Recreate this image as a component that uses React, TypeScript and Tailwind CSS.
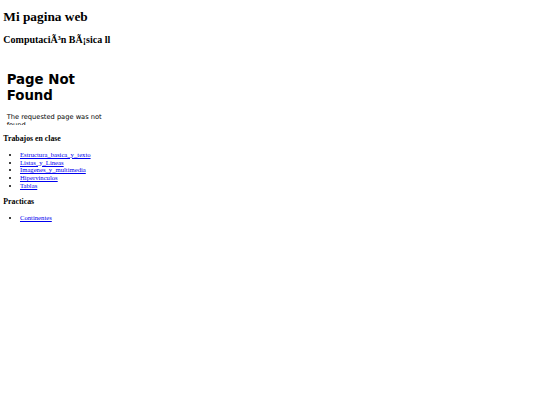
import React from "react";

const trabajos = [
    "Estructura_basica_y_texto",
    "Listas_y_Lineas",
    "Imagenes_y_multimedia",
    "Hipervinculos",
    "Tablas",
];

const practicas = ["Continentes"];

// marco embebido que muestra la pagina de error
const NotFoundFrame: React.FC = () => (
    <div className="inline-block w-[280px] h-[172px] overflow-hidden bg-white align-baseline">
        <div className="mx-2 mb-2 pt-[24px] font-['DejaVu_Sans',sans-serif] leading-[normal] text-black">
            <h1 className="mt-[21px] mb-0 text-[32px] font-bold leading-[1.2]">Page Not Found</h1>
            <p className="mt-[22px] mb-4 text-[16px] leading-[1.2]">The requested page was not found</p>
        </div>
    </div>
);

const LinkList: React.FC<{ items: string[] }> = ({ items }) => (
    <ul className="my-4 pl-10 list-disc">
        {items.map((item) => (
            <li key={item} className="leading-[1.15]">
                <a href="#" className="text-[#0000EE] underline">
                    {item}
                </a>
            </li>
        ))}
    </ul>
);

export default function App() {
    return (
        <div className="min-h-screen bg-white overflow-hidden">
            <div className="m-2 [zoom:0.41667] font-['Liberation_Serif',serif] text-[16px] leading-[normal] text-black">
                <h1 className="my-[0.67em] text-[32px] font-bold leading-[normal]">Mi pagina web</h1>
                <h2 className="my-[0.83em] text-[24px] font-bold leading-[normal]">ComputaciÃ³n BÃ¡sica ll</h2>
                <div>
                    <NotFoundFrame />
                </div>
                <h3 className="mt-[20px] mb-[1em] text-[18.72px] font-bold leading-[normal]">Trabajos en clase</h3>
                <LinkList items={trabajos} />
                <h3 className="my-[1em] text-[18.72px] font-bold leading-[normal]">Practicas</h3>
                <LinkList items={practicas} />
            </div>
        </div>
    );
}
